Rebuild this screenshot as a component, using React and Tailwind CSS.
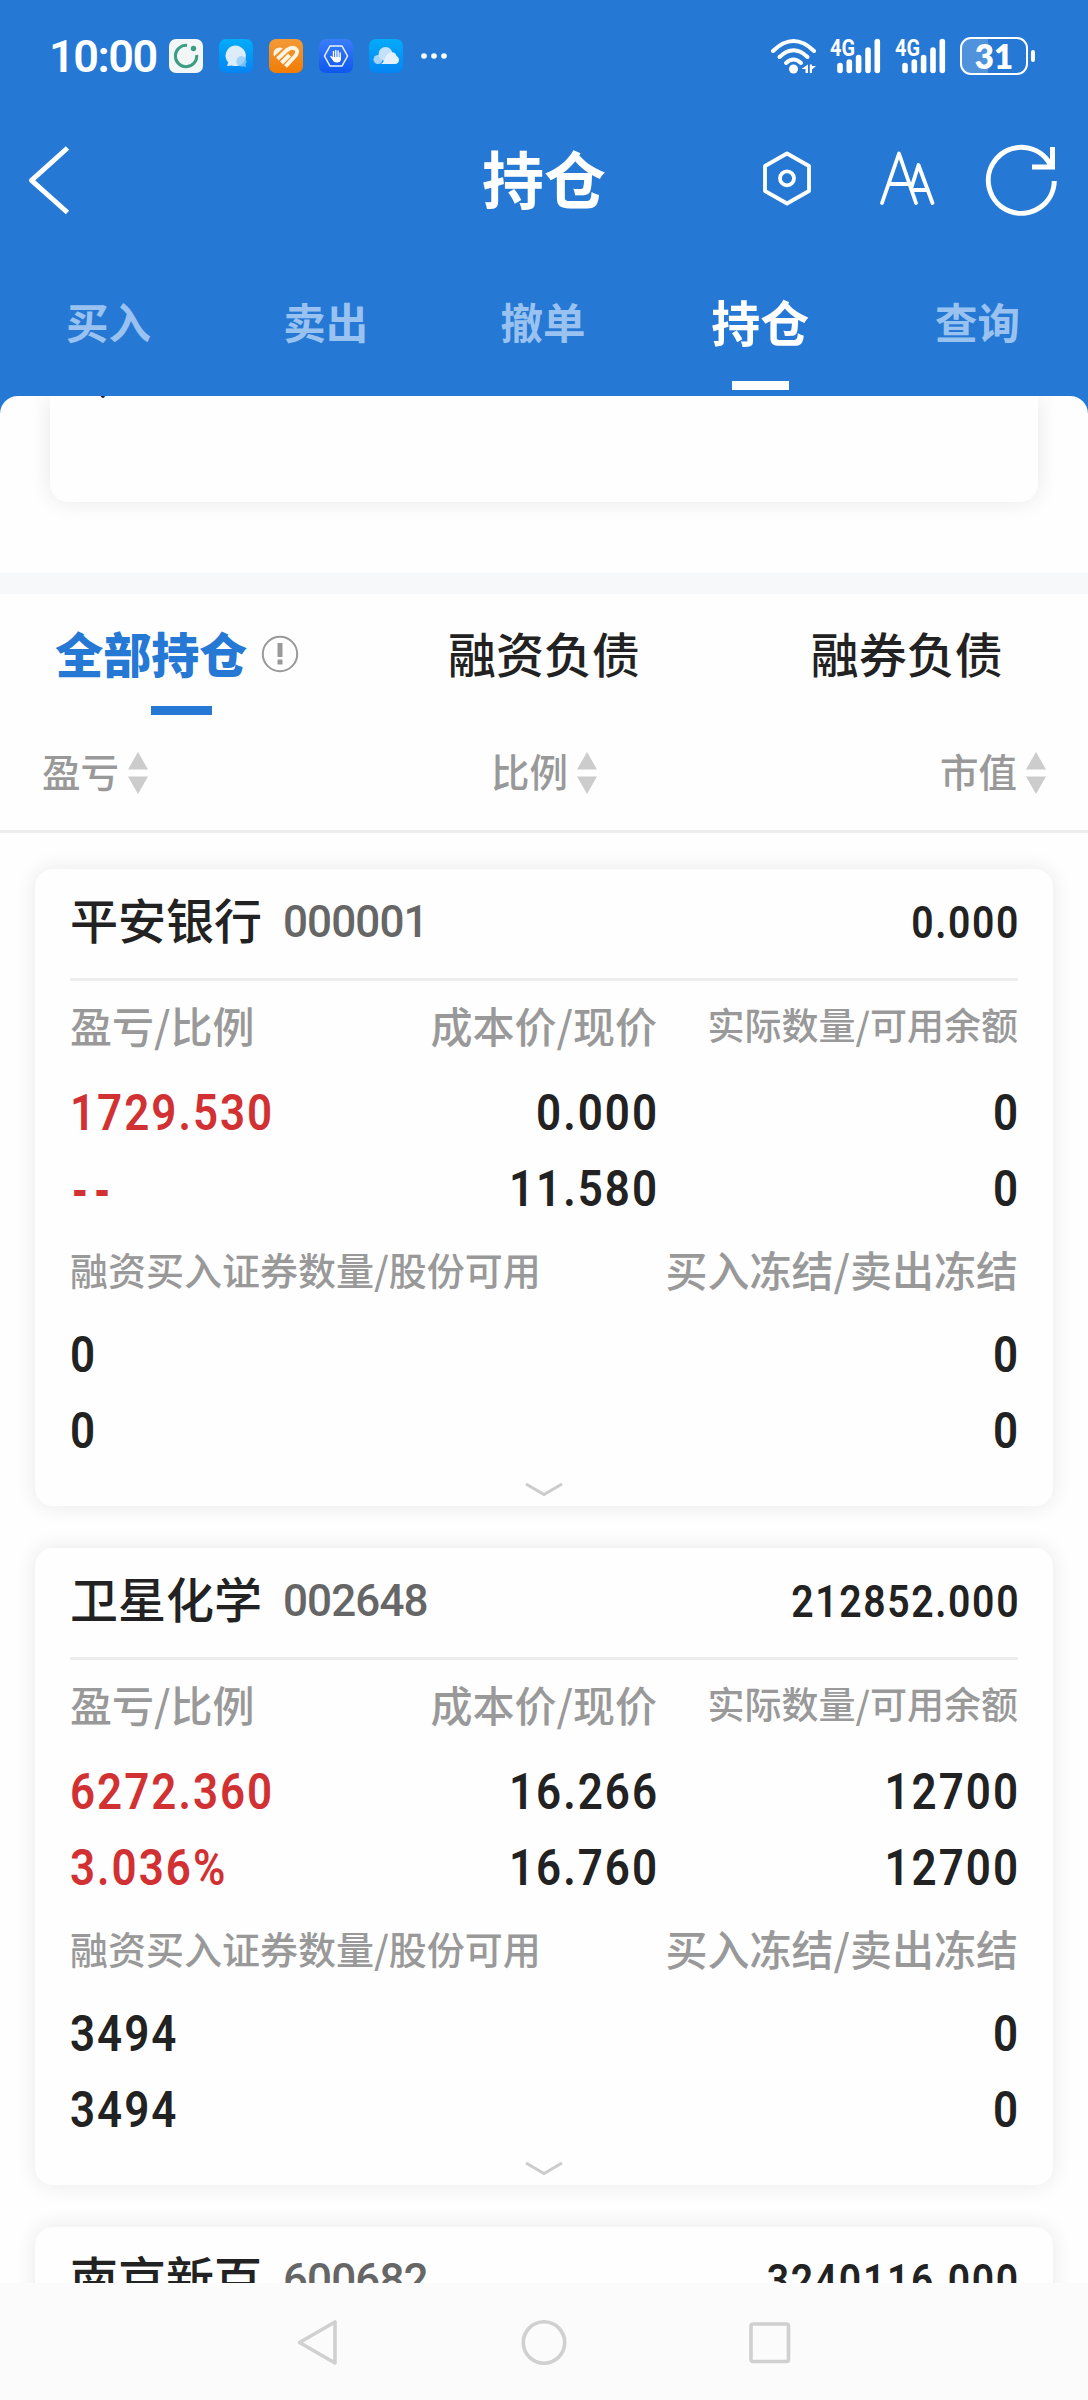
import React from 'react';

const holdings = [
  {
    name: '平安银行',
    code: '000001',
    value: '0.000',
    profit: ['1729.530', '--'],
    price: ['0.000', '11.580'],
    amount: ['0', '0'],
    margin: ['0', '0'],
    frozen: ['0', '0'],
  },
  {
    name: '卫星化学',
    code: '002648',
    value: '212852.000',
    profit: ['6272.360', '3.036%'],
    price: ['16.266', '16.760'],
    amount: ['12700', '12700'],
    margin: ['3494', '3494'],
    frozen: ['0', '0'],
  },
  {
    name: '南京新百',
    code: '600682',
    value: '3240116.000',
  },
];

const navTabs = ['买入', '卖出', '撤单', '持仓', '查询'];

function AppIcons() {
  return (
    <svg width="284" height="40" viewBox="167 36 284 40" fill="none">
      <defs>
        <linearGradient id="sky" x1="0" y1="0" x2="0" y2="1">
          <stop offset="0" stopColor="#02acf8" />
          <stop offset="1" stopColor="#0584f3" />
        </linearGradient>
        <linearGradient id="orange" x1="0" y1="0" x2="0" y2="1">
          <stop offset="0" stopColor="#f39a35" />
          <stop offset="1" stopColor="#f17c05" />
        </linearGradient>
        <linearGradient id="royal" x1="0" y1="0" x2="0" y2="1">
          <stop offset="0" stopColor="#3b7dfb" />
          <stop offset="1" stopColor="#0e57ee" />
        </linearGradient>
      </defs>
      {/* green ring */}
      <rect x="169" y="39" width="34" height="34" rx="7" fill="#f3f6f7" />
      <path d="M187 45.400A10.700 10.700 0 1 0 196.700 55" stroke="#3a9d84" strokeWidth="3" />
      <circle cx="193.500" cy="48.500" r="2.700" fill="#3a9d84" />
      {/* chat */}
      <rect x="219" y="39" width="34" height="34" rx="7" fill="url(#sky)" />
      <path d="M235.200 45.500a10.600 10.300 0 1 1-3.500 20l-4.700.6 1.200-3.500A10.300 10.300 0 0 1 235.200 45.500z" fill="#dcedf9" />
      <path d="M241 56a5.300 5.300 0 0 1 4.500 8.300l.6 2.700-2.800-.7A5.300 5.300 0 1 1 241 56z" fill="#8fcaf8" opacity=".8" />
      {/* heart made of diagonal bands */}
      <rect x="269" y="39" width="34" height="34" rx="7" fill="url(#orange)" />
      <path d="M274 56.500C271.500 50 277.500 45.500 283 48.200z" fill="#fff3e2" />
      <g stroke="#fff3e2" strokeWidth="4">
        <path d="M277.500 59L288 49" />
        <path d="M281.500 63L289.500 55" />
        <path d="M287.500 50c5-5 12.500-.5 8.500 5L285.500 66.500" />
      </g>
      {/* hand */}
      <rect x="319" y="39" width="34" height="34" rx="7" fill="url(#royal)" />
      <path d="M330 46h12l5.500 10-5.500 10h-12l-5.500-10z" stroke="#e8f6ff" strokeWidth="1.500" />
      <path d="M331 56.500l3 4M333.500 51.500v7M335.800 50.500v8M338.100 51v8M340.200 53v6" stroke="#fff" strokeWidth="1.400" strokeLinecap="round" />
      <path d="M333 57h7.900v2q0 3.500-4 3.500T333 59z" fill="#fff" />
      {/* cloud */}
      <rect x="369" y="39" width="34" height="34" rx="7" fill="url(#sky)" />
      <circle cx="378" cy="59.500" r="4.500" fill="#a5d3fa" />
      <circle cx="385.500" cy="54" r="7" fill="#c4e1fb" />
      <path d="M380.500 64c3.500-1 3.500-5 6-8.500 3.500-5 9.500-3.500 10 .5 4 2 3 8-1.500 8z" fill="#e4f1fc" />
      <g fill="#fff">
        <circle cx="424" cy="56" r="2.800" />
        <circle cx="434" cy="56" r="2.800" />
        <circle cx="444" cy="56" r="2.800" />
      </g>
    </svg>
  );
}

function Signal() {
  return (
    <svg width="52" height="40" viewBox="0 0 52 40" fill="none" className="overflow-visible">
      <text x="0" y="20" fill="#fff" fontFamily="Roboto" fontWeight="700" fontSize="24" textLength="25" lengthAdjust="spacingAndGlyphs">4G</text>
      <path d="M10 29.500v5M19.300 26v8.500M28.600 21.500v13M38 14v20.500M47.300 5.500v29" stroke="#fff" strokeWidth="5.600" strokeLinecap="round" />
    </svg>
  );
}

function StatusBar() {
  return (
    <div className="flex h-28 items-center justify-between pl-[49px] pr-[53px]">
      <div className="flex items-center">
        <span className="w-[118px] font-[Roboto] text-[45px] leading-none font-semibold tracking-[-1.5px]">10:00</span>
        <AppIcons />
      </div>
      <div className="flex items-center">
        <svg width="46" height="40" viewBox="770 36 46 40" fill="none" className="mr-[13px]">
          <g stroke="#fff" strokeWidth="4" strokeLinecap="round">
            <path d="M772 51Q792.500 31 813 51" />
            <path d="M778.500 57Q792.500 43.500 806.500 57" />
            <path d="M785 63Q792.500 56 800 63" />
          </g>
          <circle cx="792.500" cy="69" r="4.500" fill="#fff" />
          <path d="M807 64.500v8.500h-2.500v-4h-4zM808.800 64.500v8.500h2.200v-3.500l4-3.500h-4v-1.500z" fill="#fff" />
        </svg>
        <Signal />
        <div className="w-[13px]" />
        <Signal />
        <div className="ml-[13px] flex items-center">
          <div className="relative flex h-[38px] w-[68px] items-center justify-center overflow-hidden rounded-[11px] border-[2.5px] border-white">
            <div className="absolute inset-y-0 left-0 w-[26px] bg-white/20" />
            <span className="relative font-[Lato] text-[33px] leading-none font-extrabold">31</span>
          </div>
          <div className="ml-[3px] h-3 w-[4px] rounded-full bg-white" />
        </div>
      </div>
    </div>
  );
}

function TitleBar() {
  return (
    <div className="grid h-[136px] grid-cols-[1fr_auto_1fr] items-center">
      <svg width="44" height="72" viewBox="27 144 44 72" fill="none" stroke="#fff" strokeWidth="5" className="ml-[27px]">
        <path d="M67.500 148L31.500 180.300L67.500 212.500" strokeLinejoin="round" />
      </svg>
      <h1 className="pb-[6px] text-[62px] leading-none font-bold">持仓</h1>
      <div className="flex justify-end pr-7">
        <svg width="300" height="76" viewBox="760 143 300 76" fill="none" stroke="#fff" strokeWidth="3.800">
          <path d="M787 154.500L809 167V192L787 204.500L765 192V167Z" strokeLinejoin="round" />
          <circle cx="787" cy="179.300" r="7" />
          <path d="M882 204L899 154.500L916 204M888.500 185H910.500M911 190L918.500 166L932.500 204M914 191H928" strokeLinecap="round" strokeLinejoin="round" />
          <path d="M1054.300 182A33 33 0 1 1 1050 165M1032 168H1052.500V148" strokeWidth="5" />
        </svg>
      </div>
    </div>
  );
}

function NavTabs() {
  return (
    <div className="grid h-[148px] w-[1086px] grid-cols-5">
      {navTabs.map((tab) => {
        const active = tab === '持仓';
        return (
          <div key={tab} className="flex flex-col items-center pt-[43px]">
            <span className={active ? 'h-[90px] text-[49px] leading-[60px] font-bold' : 'h-[90px] text-[42.5px] leading-[60px] font-bold text-[#99c2f0]'}>
              {tab}
            </span>
            {active && <div className="h-[9px] w-[57px] bg-white" />}
          </div>
        );
      })}
    </div>
  );
}

function SortLabel({ children }) {
  return (
    <div className="flex items-center gap-[9px] text-[38.5px] leading-none font-medium text-[#999999]">
      <span className="pb-1">{children}</span>
      <svg width="20" height="42" viewBox="0 0 20 42" fill="#cccccc">
        <path d="M10 0L20 17.500H0zM10 42L20 24.500H0z" />
      </svg>
    </div>
  );
}

// numbers are set narrow, with open spacing
function Values({ items, className }) {
  return (
    <div className={`flex scale-x-[0.87] flex-col font-[Roboto] text-[50.5px] leading-[76px] font-semibold ${className}`}>
      {items.map((v, i) => (
        <span key={i} className={v === '--' ? "pl-[3px] font-['Liberation_Sans'] tracking-[8.5px]" : 'tracking-[2.3px]'}>{v}</span>
      ))}
    </div>
  );
}

function HoldingCard({ item }) {
  return (
    <div className="h-[637px] shrink-0 rounded-[18px] bg-[#fefefe] px-[35px] shadow-[0_0_22px_rgba(0,0,0,0.09)]">
      <div className="flex h-[112px] items-center justify-between border-b-[3px] border-[#ededed]">
        <div className="flex items-center">
          <span className="pb-[11px] text-[48px] leading-none font-medium text-[#222222]">{item.name}</span>
          <span className="ml-[21px] pb-[3px] font-[Roboto] text-[44px] leading-none font-medium tracking-[-0.9px] text-[#666666]">{item.code}</span>
        </div>
        <span className="-mr-[2px] origin-right scale-x-[0.87] pb-[3px] font-[Roboto] text-[45px] leading-none font-semibold tracking-[1.9px] text-[#222222]">{item.value}</span>
      </div>

      {item.profit && (
        <>
          <div className="grid h-[92px] grid-cols-[200px_387px_1fr] items-center pb-[5px] text-[42px] leading-none font-medium whitespace-nowrap text-[#999999]">
            <span>盈亏/比例</span>
            <span className="text-right">成本价/现价</span>
            <span className="text-right text-[37px]">实际数量/可用余额</span>
          </div>
          <div className="grid h-[152px] grid-cols-[220px_367px_1fr] pt-[2px] text-[#222222]">
            <Values items={item.profit} className="origin-left text-[#d13132]" />
            <Values items={item.price} className="-mr-[2px] origin-right items-end" />
            <Values items={item.amount} className="-mr-[2px] origin-right items-end" />
          </div>

          <div className="flex h-[92px] items-center justify-between pb-[5px] text-[42px] leading-none font-medium text-[#999999]">
            <span className="text-[38px]">融资买入证券数量/股份可用</span>
            <span>买入冻结/卖出冻结</span>
          </div>
          <div className="flex h-[152px] justify-between text-[#222222]">
            <Values items={item.margin} className="origin-left items-start" />
            <Values items={item.frozen} className="-mr-[2px] origin-right items-end" />
          </div>

          <svg width="38" height="16" viewBox="0 0 38 16" fill="none" stroke="#cccccc" strokeWidth="3" className="mx-auto mt-[13px]">
            <path d="M1 2L19 12.500L37 2" />
          </svg>
        </>
      )}
    </div>
  );
}

export default function App() {
  return (
    <div className="flex h-[2400px] w-[1088px] flex-col overflow-hidden bg-[#2578d4] font-['Noto_Sans_CJK_SC',sans-serif]">
      <header className="h-[396px] shrink-0 text-white">
        <StatusBar />
        <TitleBar />
        <NavTabs />
      </header>

      <main className="flex h-[1887px] shrink-0 flex-col overflow-hidden rounded-t-[18px] bg-[#fefefe]">
        {/* tail of the asset card, scrolled under the header */}
        <div className="h-[177px] shrink-0 overflow-hidden px-[50px]">
          <div className="flex h-[106px] items-start overflow-hidden rounded-b-[18px] bg-[#fefefe] pl-[50px] shadow-[0_0_22px_rgba(0,0,0,0.09)]">
            <span className="-mt-[37px] font-[Roboto] text-[40px] leading-[40px] font-medium text-[#222233]">,</span>
          </div>
        </div>
        <div className="h-[21px] shrink-0 bg-[#f6f8fa]" />

        <div className="grid h-[121px] shrink-0 grid-cols-3 text-[48px] leading-[60px] font-medium text-[#222222]">
          <div className="flex flex-col items-center pt-[28px]">
            <div className="mr-2 flex h-[84px] gap-[14px] font-black text-[#2578d4]">
              全部持仓
              <svg width="38" height="60" viewBox="0 0 38 60" fill="none" stroke="#999999" className="mt-[2px]">
                <circle cx="19" cy="30" r="17.200" strokeWidth="2" />
                <path d="M19 19v14M19 35.500v5" strokeWidth="5" />
              </svg>
            </div>
            <div className="h-[9px] w-[61px] bg-[#2578d4]" />
          </div>
          <div className="pt-[28px] text-center">融资负债</div>
          <div className="pt-[28px] text-center">融券负债</div>
        </div>

        <div className="flex h-[118px] shrink-0 items-center justify-between border-b-[3px] border-[#ededed] px-[42px]">
          <SortLabel>盈亏</SortLabel>
          <SortLabel>比例</SortLabel>
          <SortLabel>市值</SortLabel>
        </div>

        <div className="flex flex-col gap-[42px] px-[35px] pt-9">
          {holdings.map((item) => (
            <HoldingCard key={item.code} item={item} />
          ))}
        </div>
      </main>

      <nav className="flex h-[117px] shrink-0 items-center justify-center bg-[#fbfbfb]">
        <svg width="500" height="50" viewBox="294 2316 500 50" fill="none" stroke="#d0d0d0" strokeWidth="3.600" strokeLinejoin="round">
          <path d="M299.500 2341.500L335 2321V2362Z" />
          <circle cx="544" cy="2341.500" r="20.700" />
          <rect x="751" y="2323" width="37.500" height="37.500" rx="2" />
        </svg>
      </nav>
    </div>
  );
}
